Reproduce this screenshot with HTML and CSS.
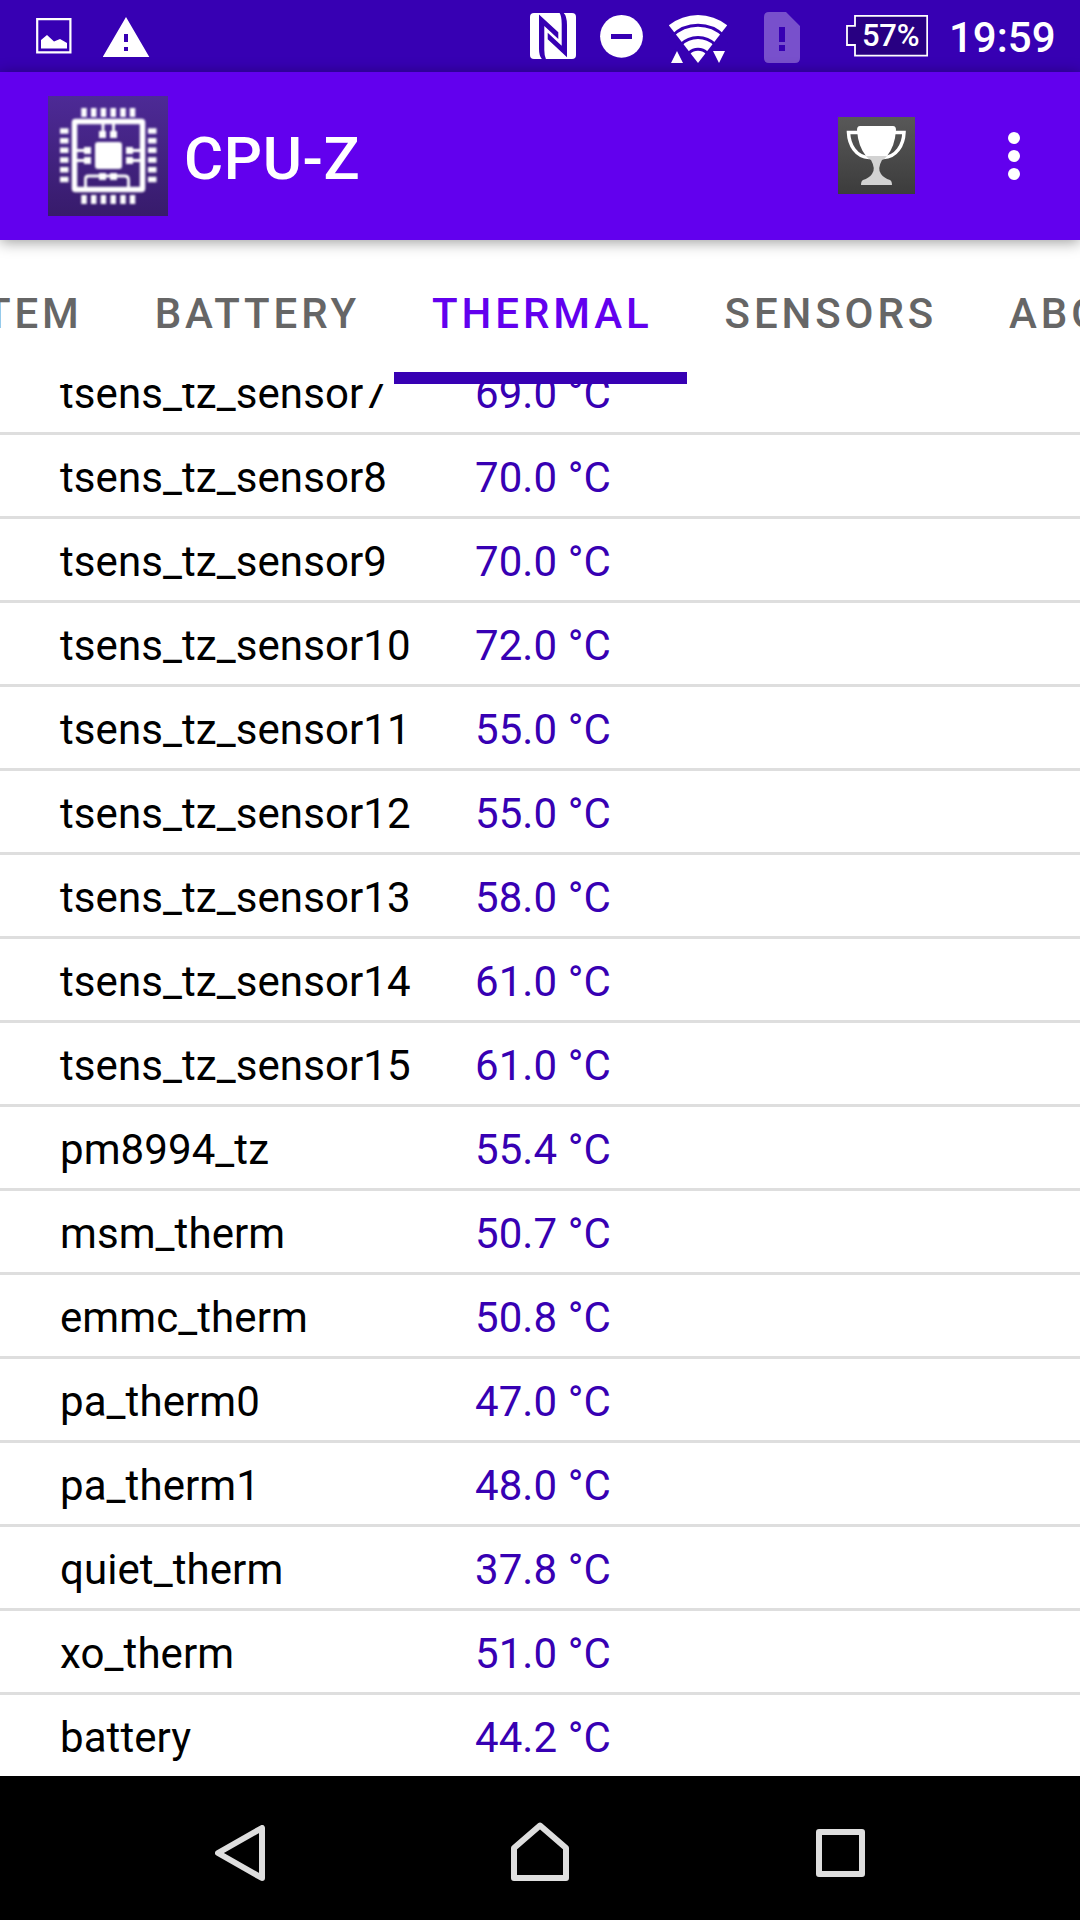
FILE: index.html
```html
<!DOCTYPE html>
<html lang="en">
<head>
<meta charset="utf-8">
<title>CPU-Z</title>
<link rel="stylesheet" href="styles.css">
</head>
<body>
<div class="screen">
  <header class="status">
    <svg width="36" height="72" viewBox="36 0 36 72"><path d="M37.2 19.2h33.2v33.2H37.2z" fill="none" stroke="#fff" stroke-width="2.2"/><path d="M41 48.500V40l6-5 7 6.500 6-2.500 7 4v5.500z" fill="#fff"/></svg>
    <svg class="warn" width="47" height="72" viewBox="103 0 47 72"><path fill="#fff" fill-rule="evenodd" d="M126 17l23.300 40h-46.600zM124 34v8h4v-8zm0 13v4h4v-4z"/></svg>
    <span class="grow"></span>
    <svg width="46" height="72" viewBox="530 0 46 72"><rect x="530" y="13" width="46" height="46" rx="4" fill="#fff"/><path d="M539 14.500L558.300 32.300V39L544.300 26V50Q544.300 56 546 59.300H542Q539 56 539 49zM547.700 32.700L561.700 45.700V24Q561.700 16 559.500 12.700H563.500Q567 16 567 25V57.300L547.700 39.300z" fill="#3700b3"/></svg>
    <svg class="dnd" width="43" height="72" viewBox="600 0 43 72"><circle cx="621.500" cy="36.300" r="21.400" fill="#fff"/><path d="M611 34h21v5h-21z" fill="#3700b3"/></svg>
    <svg class="wifi" width="60" height="72" viewBox="668 0 60 72"><path d="M698 63L668.800 25.200A47.300 47.300 0 0 1 727.200 25.200z" fill="#fff"/><path d="M661.300 62a36.700 36.700 0 0 1 73.400 0M673.500 62a24.500 24.500 0 0 1 49 0M685.300 62a12.700 12.700 0 0 1 25.400 0" fill="none" stroke="#3700b3" stroke-width="3"/><path d="M671 63l6-12 6 12zM713 51h12l-6 12z" fill="#fff"/></svg>
    <svg class="sim" width="36" height="72" viewBox="764 0 36 72"><path fill="#7850cc" fill-rule="evenodd" d="M769 12h17l14 14v32q0 5-5 5h-26q-5 0-5-5V17q0-5 5-5zM779 27v15h6V27zm0 18v6h6v-6z"/></svg>
    <div class="battery"><svg width="82" height="72" viewBox="846 0 82 72"><path d="M855 15.800h72.200v39.800H855V45h-8V25.800h8z" fill="#280082" stroke="#fff" stroke-width="1.800"/></svg><span class="pct">57%</span></div>
    <span class="clock">19:59</span>
  </header>
  <div class="toolbar">
    <svg class="logo" width="120" height="120" viewBox="0 0 120 120">
      <defs><linearGradient id="lg" x1="0" y1="0" x2="0" y2="1"><stop offset="0" stop-color="#4d2a96"/><stop offset="1" stop-color="#371b6b"/></linearGradient></defs>
      <rect width="120" height="120" fill="url(#lg)"/>
      <g class="glow">
      <g fill="none" stroke="#fff">
        <path d="M36 12v9M45.700 12v9M55.400 12v9M65.200 12v9M75 12v9M84.500 12v9M36 99v9M45.700 99v9M55.400 99v9M65.200 99v9M75 99v9M84.500 99v9M12 35h8.500M12 44.700h8.500M12 54.300h8.500M12 64h8.500M12 73.700h8.500M12 83.500h8.500M100 35h8.500M100 44.700h8.500M100 54.300h8.500M100 64h8.500M100 73.700h8.500M100 83.500h8.500" stroke-width="5.500"/>
        <rect x="26.500" y="25.500" width="68" height="68" rx="1" stroke-width="5.500"/>
        <path d="M55 28v10M65.500 28v10M28 54.500h11M28 64.500h11M81 54.500h12M81 64.500h12M37.500 92V83q0-3 3-3h36q4 0 4 4v8" stroke-width="2.800"/>
      </g>
      <path fill="#fff" d="M51 35h7v7h-7zM62 35h7v7h-7zM51 77h7v7h-7zM62 77h7v7h-7zM36 51h7v7h-7zM36 61h7v7h-7zM78 51h7v7h-7zM78 61h7v7h-7z"/>
      <rect x="47" y="46" width="27" height="27" rx="3" fill="#fff"/>
      </g>
    </svg>
    <h1 class="title">CPU-Z</h1>
    <svg class="trophy" width="77" height="77" viewBox="0 0 77 77">
      <defs><linearGradient id="tg" x1="0" y1="0" x2="0" y2="1"><stop offset="0" stop-color="#585858"/><stop offset="1" stop-color="#3c3c3c"/></linearGradient></defs>
      <rect width="77" height="77" fill="url(#tg)"/>
      <path d="M21 15.500H10.500C11 28 18 40 31 40.500M55.500 15.500H66C65.500 28 58.500 40 45.500 40.500" fill="none" stroke="#fff" stroke-width="3.500"/>
      <path d="M19 13q0-4 3-4h33q3 0 3 4-1 16-9 26H28q-8-10-9-26z" fill="#fff"/>
      <path d="M28 39h21q-2 3-5 4-5 9-1 14 3 4 9 6 2 1 2 5H23q0-4 2-5 6-2 9-6 4-5-1-14-3-1-5-4z" fill="#d2d2d2"/>
    </svg>
    <svg class="more" width="12" height="48" viewBox="0 0 12 48"><g fill="#fff"><circle cx="6" cy="6" r="6"/><circle cx="6" cy="24" r="6"/><circle cx="6" cy="42" r="6"/></g></svg>
  </div>
  <nav class="tabs">
    <span class="tab">SYSTEM</span><span class="tab">BATTERY</span><span class="tab active">THERMAL</span><span class="tab">SENSORS</span><span class="tab">ABOUT</span>
  </nav>
  <main class="list">
    <div class="row"><span>tsens_tz_sensor7</span><span class="val">69.0 °C</span></div>
    <div class="row"><span>tsens_tz_sensor8</span><span class="val">70.0 °C</span></div>
    <div class="row"><span>tsens_tz_sensor9</span><span class="val">70.0 °C</span></div>
    <div class="row"><span>tsens_tz_sensor10</span><span class="val">72.0 °C</span></div>
    <div class="row"><span>tsens_tz_sensor11</span><span class="val">55.0 °C</span></div>
    <div class="row"><span>tsens_tz_sensor12</span><span class="val">55.0 °C</span></div>
    <div class="row"><span>tsens_tz_sensor13</span><span class="val">58.0 °C</span></div>
    <div class="row"><span>tsens_tz_sensor14</span><span class="val">61.0 °C</span></div>
    <div class="row"><span>tsens_tz_sensor15</span><span class="val">61.0 °C</span></div>
    <div class="row"><span>pm8994_tz</span><span class="val">55.4 °C</span></div>
    <div class="row"><span>msm_therm</span><span class="val">50.7 °C</span></div>
    <div class="row"><span>emmc_therm</span><span class="val">50.8 °C</span></div>
    <div class="row"><span>pa_therm0</span><span class="val">47.0 °C</span></div>
    <div class="row"><span>pa_therm1</span><span class="val">48.0 °C</span></div>
    <div class="row"><span>quiet_therm</span><span class="val">37.8 °C</span></div>
    <div class="row"><span>xo_therm</span><span class="val">51.0 °C</span></div>
    <div class="row"><span>battery</span><span class="val">44.2 °C</span></div>
  </main>
  <footer class="nav">
    <svg width="50" height="56" viewBox="0 0 50 56"><path d="M47 3v50L3 28z"/></svg>
    <svg class="home" width="58" height="59" viewBox="0 0 58 59"><path d="M3 56V26L29 3.500 55 26v30z"/></svg>
    <svg width="49" height="48" viewBox="0 0 49 48"><path d="M3 3h43v42H3z"/></svg>
  </footer>
</div>
</body>
</html>
```
FILE: styles.css
```css
* { box-sizing: border-box; }
body { margin: 0; background: #fff; font-family: Roboto, sans-serif; }
svg { display: block; flex: none; }
.screen { width: 1080px; height: 1920px; display: flex; flex-direction: column; overflow: hidden; }

.status { flex: none; height: 72px; background: #3700b3; color: #fff; display: flex; align-items: center; padding: 0 24px 0 36px; }
.warn { margin-left: 31px; }
.grow { flex: 1; }
.dnd { margin-left: 24px; }
.wifi { margin-left: 25px; }
.sim { margin-left: 36px; }
.battery { margin-left: 46px; width: 82px; display: grid; align-items: center; }
.battery > * { grid-area: 1 / 1; }
.pct { font-size: 31px; font-weight: 500; line-height: 72px; padding-left: 16px; letter-spacing: -.3px; }
.clock { width: 107px; margin-left: 21px; font-size: 42px; font-weight: 500; line-height: 68px; padding-top: 4px; white-space: nowrap; }

.toolbar { flex: none; height: 168px; background: #6200ee; color: #fff; display: flex; align-items: center; padding: 0 60px 0 48px; box-shadow: 0 2px 14px rgba(0, 0, 0, .4); z-index: 3; }
.glow { filter: blur(.8px); }
.title { flex: 1; margin: 0 0 0 16px; padding-top: 5px; font-size: 60px; font-weight: 500; line-height: 84px; letter-spacing: .6px; }
.trophy { margin: 0 93px 1px 0; }

.tabs { flex: none; height: 144px; margin-left: -141px; background: #fff; display: flex; z-index: 2; }
.tab { flex: none; padding: 0 34px 0 38px; font-size: 42px; font-weight: 500; letter-spacing: 3.9px; line-height: 148px; height: 144px; color: #666; }
.active { color: #6200ee; border-bottom: 12px solid #3700b3; }

.list { flex: none; height: 1392px; display: flex; flex-direction: column; justify-content: flex-end; overflow: hidden; }
.row { flex: none; height: 84px; display: grid; grid-template-columns: 415px 1fr; padding-left: 60px; border-bottom: 3px solid #dedede; font-size: 42px; line-height: 85px; letter-spacing: .08px; color: #000; }
.row:last-child { border-bottom: 0; height: 81px; }
.val { color: #3700b3; }

.nav { flex: none; height: 144px; background: #000; display: flex; align-items: center; justify-content: space-between; padding: 10px 215px 0 215px; }
.nav path { fill: none; stroke: #dedede; stroke-width: 6; stroke-linejoin: round; }
.home { margin: 0 1px 3px 0; }
```
